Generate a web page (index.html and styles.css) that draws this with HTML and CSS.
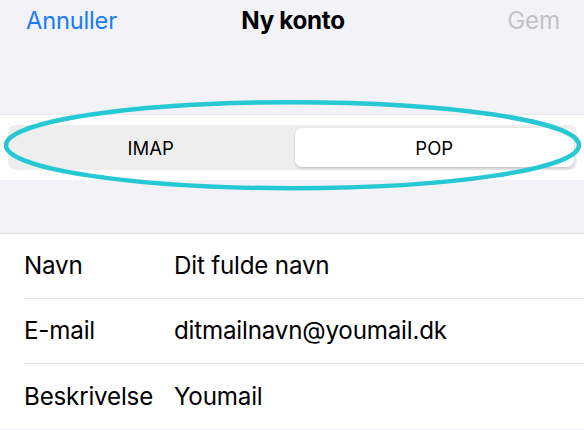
FILE: index.html
```html
<!DOCTYPE html>
<html lang="da">
<head>
<meta charset="utf-8">
<title>Ny konto</title>
<link rel="stylesheet" href="styles.css">
</head>
<body>
<div class="page">
  <header class="nav">
    <span class="nav-btn cancel">Annuller</span>
    <span class="nav-title">Ny konto</span>
    <span class="nav-btn save">Gem</span>
  </header>

  <section class="band">
    <div class="segmented">
      <div class="seg">IMAP</div>
      <div class="seg seg-active">POP</div>
    </div>
  </section>

  <section class="list">
    <div class="row">
      <span class="label">Navn</span>
      <span class="value">Dit fulde navn</span>
    </div>
    <div class="row">
      <span class="label">E-mail</span>
      <span class="value">ditmailnavn@youmail.dk</span>
    </div>
    <div class="row">
      <span class="label">Beskrivelse</span>
      <span class="value">Youmail</span>
    </div>
  </section>

  <svg class="highlight" width="584" height="110" viewBox="0 0 584 110" aria-hidden="true">
    <ellipse cx="292.5" cy="50.2" rx="286.5" ry="43" fill="none" stroke="#25c8d3" stroke-width="4.5"/>
  </svg>
</div>
</body>
</html>
```

FILE: styles.css
```css
* {
  box-sizing: border-box;
}

html, body {
  margin: 0;
  padding: 0;
}

body {
  background: #f2f2f7;
  font-family: "Inter", "Liberation Sans", "DejaVu Sans", sans-serif;
  color: #000;
  width: 584px;
  height: 430px;
  overflow: hidden;
}

.page {
  position: relative;
  width: 584px;
  height: 430px;
}

.nav {
  height: 40px;
  display: grid;
  grid-template-columns: 1fr auto 1fr;
  align-items: center;
  padding: 0 24px 0 26px;
  font-size: 23.7px;
  letter-spacing: -0.2px;
}

.nav-btn.cancel {
  color: #1a7cf6;
  justify-self: start;
}

.nav-btn.save {
  color: #c3c3c6;
  justify-self: end;
  font-size: 24.2px;
}

.nav-title {
  font-weight: 700;
  font-size: 24.2px;
  letter-spacing: -0.3px;
}

.band {
  margin-top: 74px;
  background: #fff;
  border-top: 1px solid #e6e6eb;
  padding: 10px 7px 10px 8px;
}

.segmented {
  height: 45px;
  background: #eeeeef;
  border-radius: 8px;
  padding: 3px;
  display: grid;
  grid-template-columns: 1fr 1fr;
  column-gap: 4px;
}

.seg {
  display: flex;
  align-items: center;
  justify-content: center;
  font-size: 18.5px;
  font-weight: 400;
  letter-spacing: 0;
  border-radius: 7px;
}

.seg-active {
  background: #fff;
  box-shadow: 0 2px 3px rgba(0, 0, 0, 0.13), 0 0 0 0.5px rgba(0, 0, 0, 0.05);
}

.list {
  margin-top: 53px;
  background: #fff;
  border-top: 1px solid #d9d9de;
}

.row {
  height: 65px;
  display: flex;
  align-items: center;
  margin-left: 24px;
  border-bottom: 1px solid #e4e4e8;
  font-size: 24.2px;
  letter-spacing: -0.2px;
  padding-bottom: 1px;
}

.row:last-child {
  border-bottom: none;
}

.label {
  width: 150px;
  flex: none;
}

.highlight {
  position: absolute;
  left: 0;
  top: 95px;
  pointer-events: none;
}
```
